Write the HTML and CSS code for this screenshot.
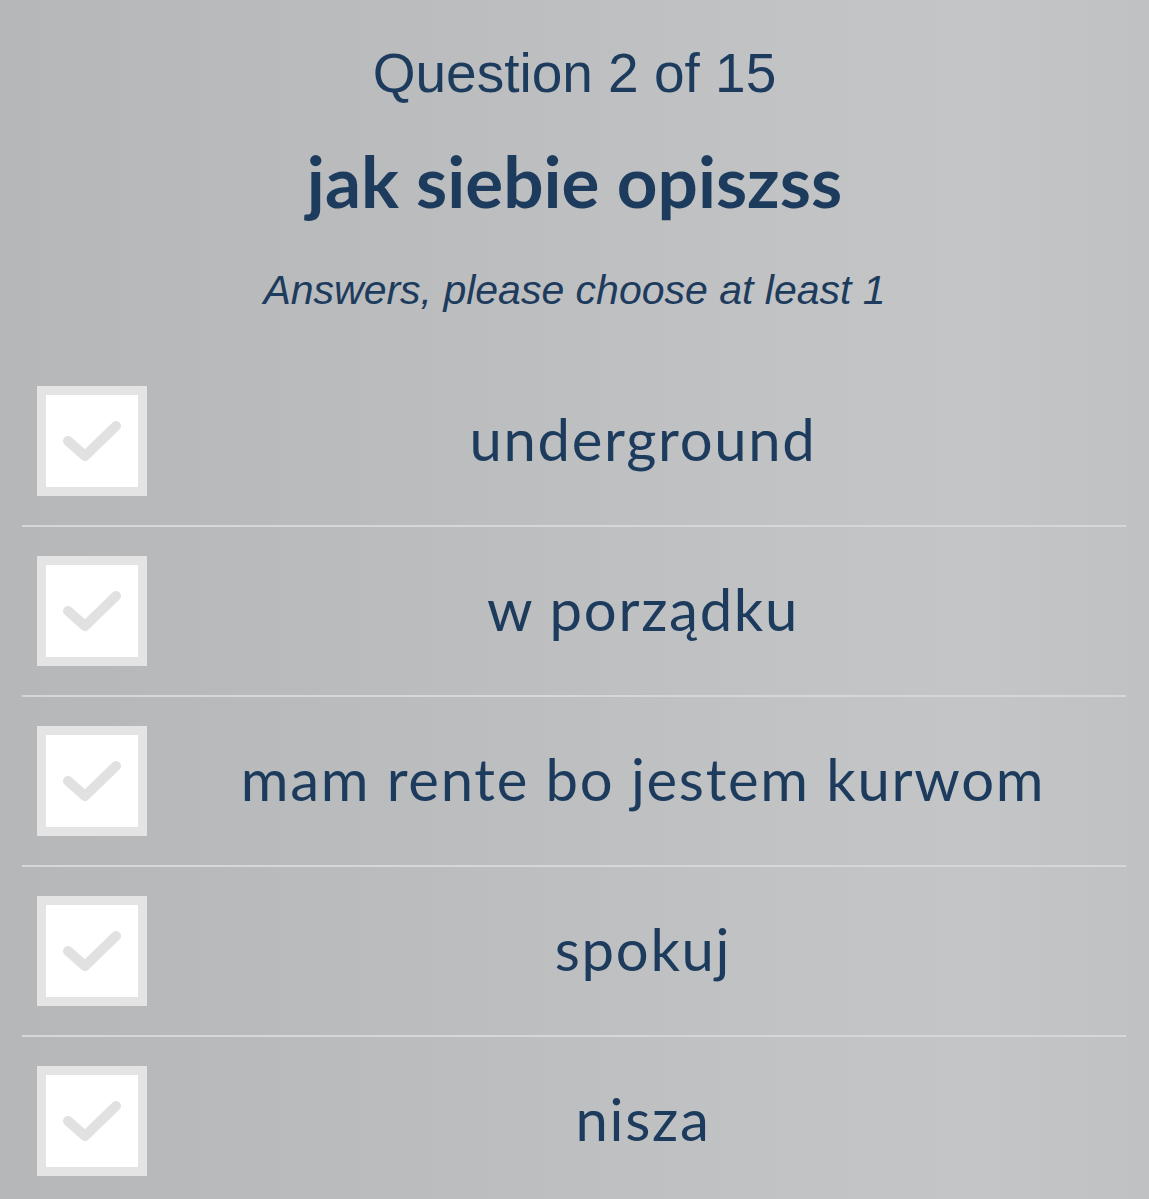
FILE: index.html
```html
<!DOCTYPE html>
<html lang="pl">
<head>
<meta charset="utf-8">
<title>Question 2 of 15</title>
<link rel="stylesheet" href="styles.css">
</head>
<body>
<main class="quiz">
  <header class="quiz-head">
    <div class="counter">Question 2 of 15</div>
    <h1 class="question">jak siebie opiszss</h1>
    <p class="hint">Answers, please choose at least 1</p>
  </header>
  <ul class="answers">
    <li class="answer">
      <span class="box"><svg class="tick" viewBox="0 0 92 92"><path d="M22 46 L39 61 L70 31"/></svg></span>
      <span class="label">underground</span>
    </li>
    <li class="answer">
      <span class="box"><svg class="tick" viewBox="0 0 92 92"><path d="M22 46 L39 61 L70 31"/></svg></span>
      <span class="label">w porządku</span>
    </li>
    <li class="answer">
      <span class="box"><svg class="tick" viewBox="0 0 92 92"><path d="M22 46 L39 61 L70 31"/></svg></span>
      <span class="label">mam rente bo jestem kurwom</span>
    </li>
    <li class="answer">
      <span class="box"><svg class="tick" viewBox="0 0 92 92"><path d="M22 46 L39 61 L70 31"/></svg></span>
      <span class="label">spokuj</span>
    </li>
    <li class="answer last">
      <span class="box"><svg class="tick" viewBox="0 0 92 92"><path d="M22 46 L39 61 L70 31"/></svg></span>
      <span class="label">nisza</span>
    </li>
  </ul>
</main>
</body>
</html>
```

FILE: styles.css
```css
html, body {
  margin: 0;
  padding: 0;
}
body {
  width: 1149px;
  height: 1199px;
  overflow: hidden;
  background: linear-gradient(to right, #b6b7b9 0%, #bbbcbe 35%, #c1c3c5 70%, #c3c5c7 85%, #bfc1c3 100%);
  color: #1d3b5d;
}
.quiz {
  display: flex;
  flex-direction: column;
}
.quiz-head {
  display: flex;
  flex-direction: column;
  align-items: center;
  padding-top: 41px;
}
.counter {
  font-family: "Liberation Sans", Arial, sans-serif;
  font-size: 55px;
  line-height: 64px;
}
.question {
  margin: 36px 0 0;
  font-family: Lato, "Open Sans", sans-serif;
  font-weight: 700;
  font-size: 71px;
  line-height: 80px;
}
.hint {
  margin: 45px 0 0;
  font-family: "Liberation Sans", Arial, sans-serif;
  font-style: italic;
  font-size: 41px;
  line-height: 48px;
}
.answers {
  list-style: none;
  margin: 43px 23px 0 22px;
  padding: 0;
}
.answer {
  display: flex;
  align-items: center;
  height: 168px;
  border-bottom: 2px solid #d6d7d8;
  padding-left: 15px;
}
.answer.last {
  border-bottom: none;
}
.box {
  flex: none;
  width: 92px;
  height: 92px;
  border: 9px solid #e4e4e4;
  background: #ffffff;
  display: flex;
}
.tick {
  width: 92px;
  height: 92px;
  fill: none;
  stroke: #e1e1e1;
  stroke-width: 10;
  stroke-linecap: round;
  stroke-linejoin: round;
}
.label {
  flex: 1;
  margin: 0 0 4px 13px;
  text-align: center;
  font-family: Lato, "Open Sans", sans-serif;
  font-size: 58px;
  letter-spacing: 1.7px;
  line-height: 70px;
}
```
